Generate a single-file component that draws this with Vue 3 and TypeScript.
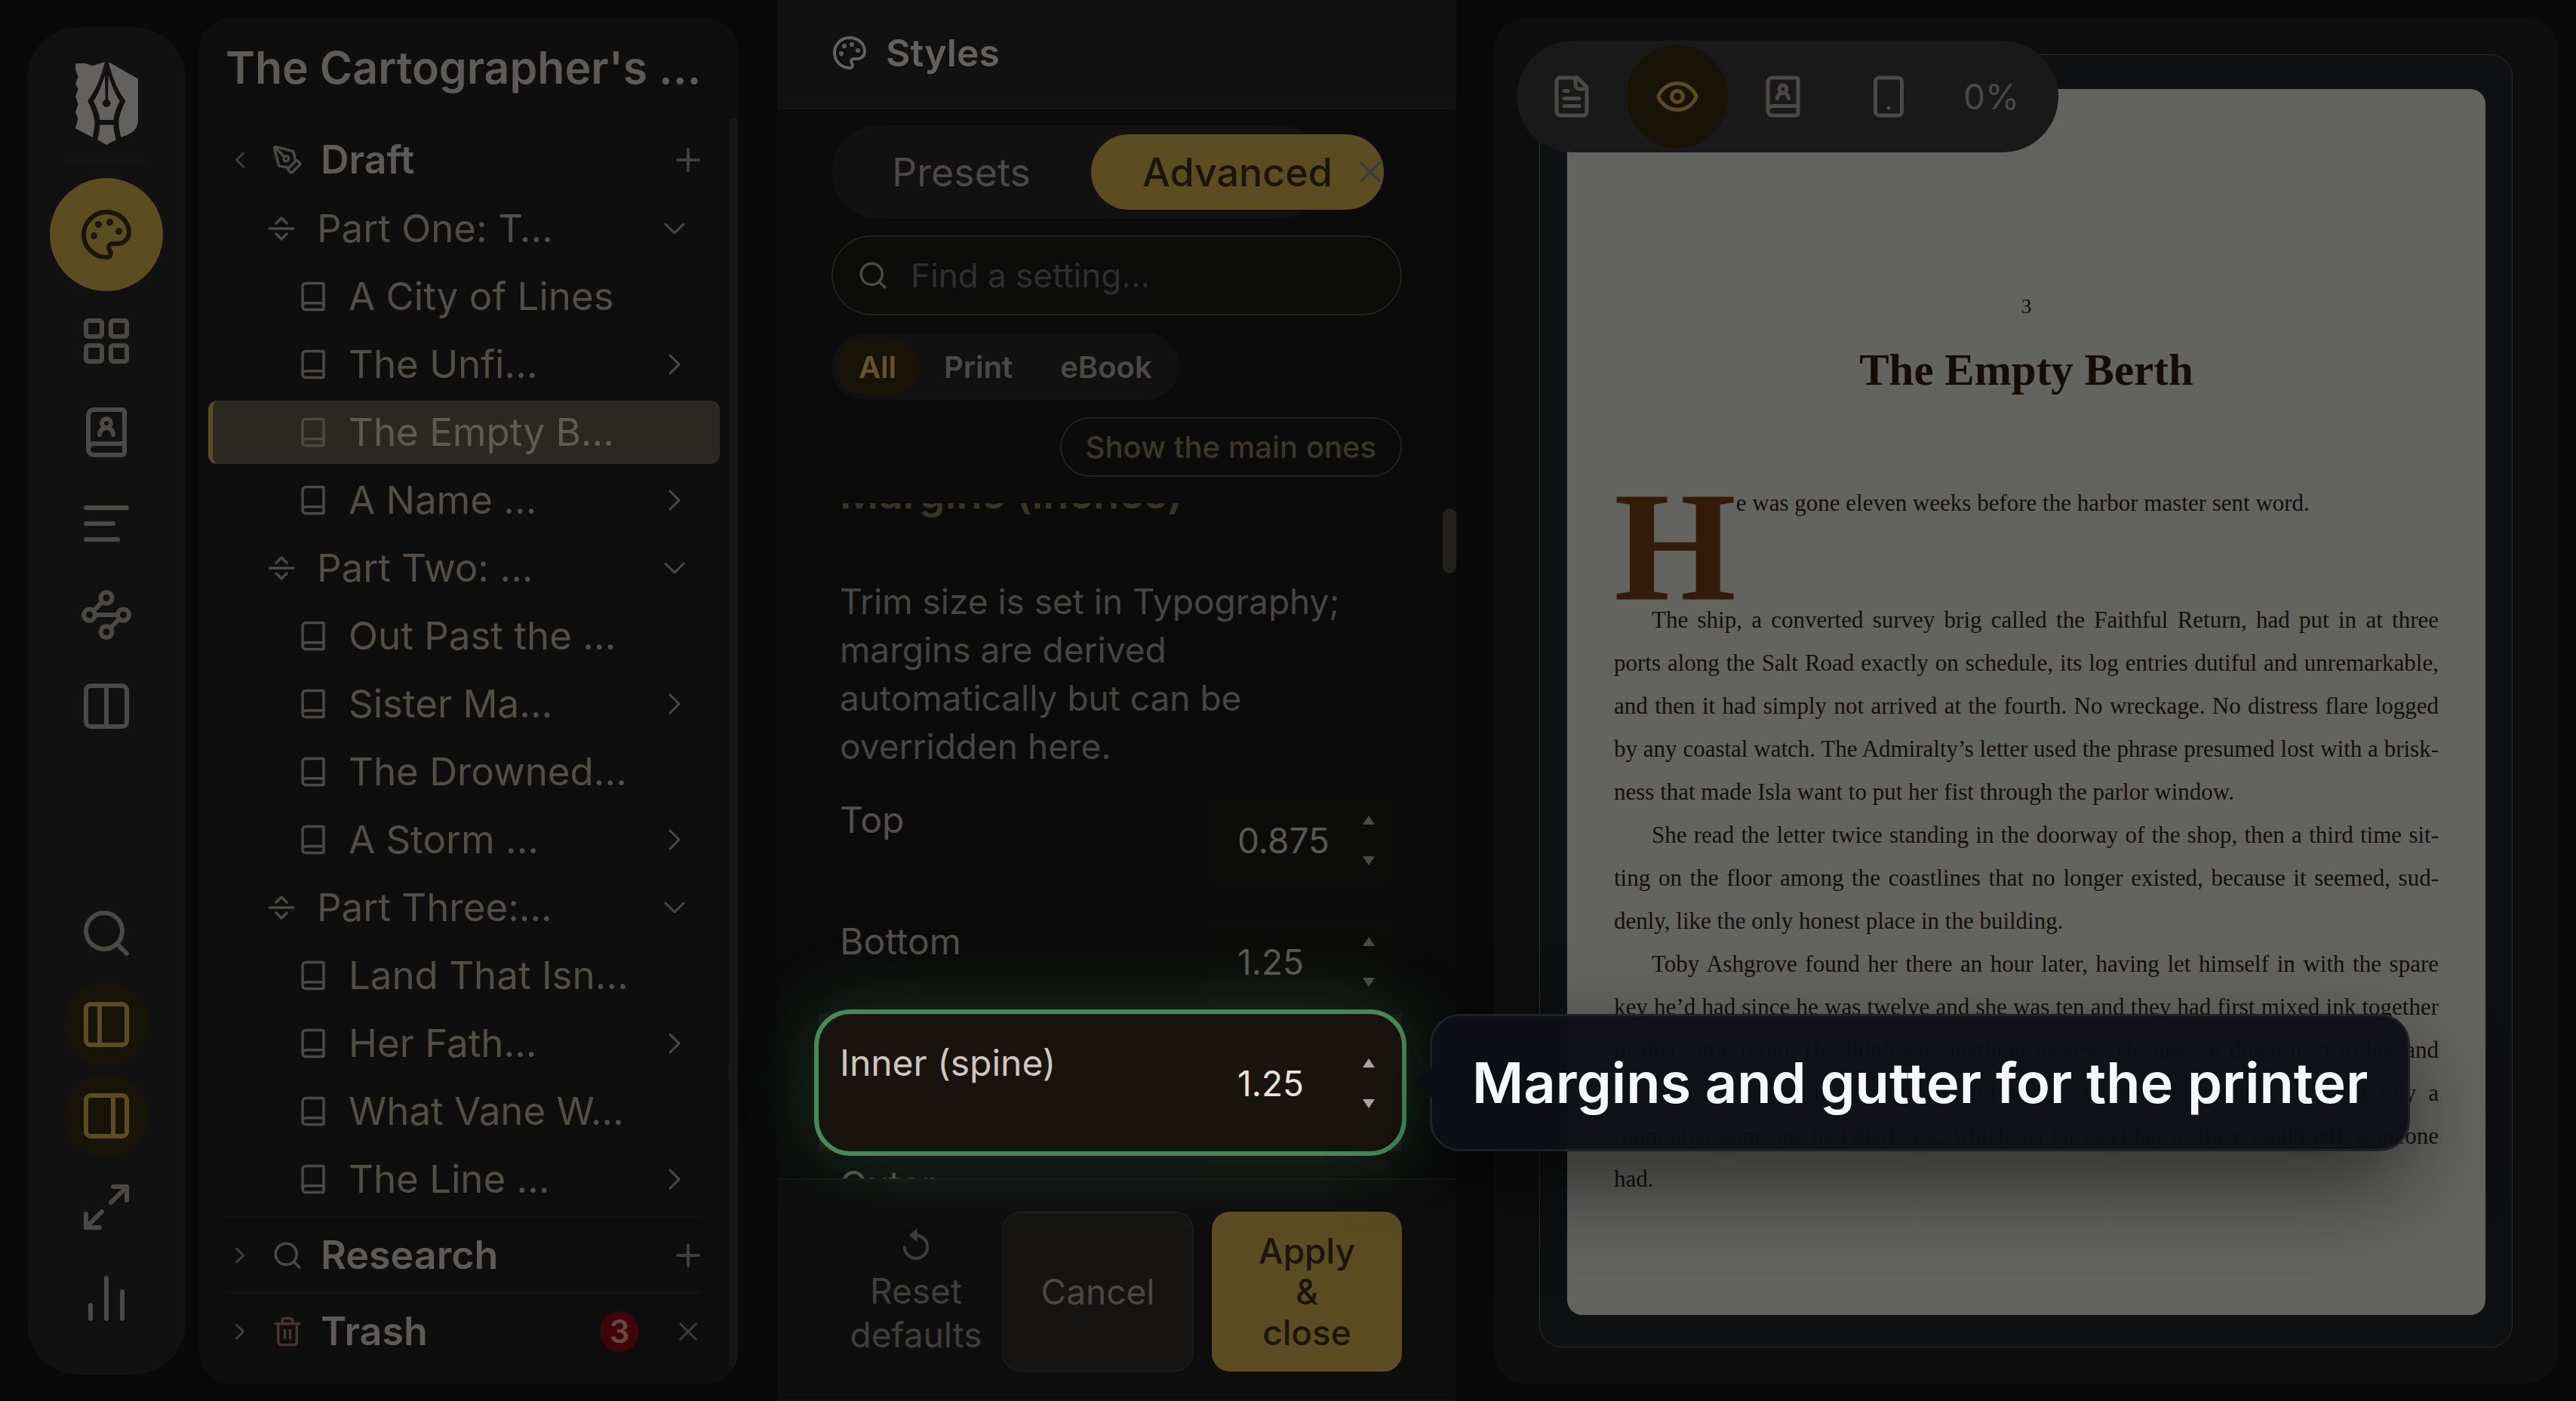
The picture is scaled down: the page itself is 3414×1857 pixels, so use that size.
<script setup lang="ts">
import { h, ref, type FunctionalComponent } from 'vue'

const glyphs: Record<string, string> = {
  palette:
    '<path d="M12 22a1 1 0 0 1 0-20 10 9 0 0 1 10 9 5 5 0 0 1-5 5h-2.25a1.75 1.75 0 0 0-1.4 2.8l.3.4a1.75 1.75 0 0 1-1.4 2.8z"/><circle cx="13.5" cy="6.5" r=".5" fill="currentColor"/><circle cx="17.5" cy="10.5" r=".5" fill="currentColor"/><circle cx="6.5" cy="12.5" r=".5" fill="currentColor"/><circle cx="8.5" cy="7.5" r=".5" fill="currentColor"/>',
  grid: '<rect width="7" height="7" x="3" y="3" rx="1"/><rect width="7" height="7" x="14" y="3" rx="1"/><rect width="7" height="7" x="14" y="14" rx="1"/><rect width="7" height="7" x="3" y="14" rx="1"/>',
  bookUser:
    '<path d="M15 13a3 3 0 1 0-6 0"/><path d="M4 19.5v-15A2.5 2.5 0 0 1 6.5 2H19a1 1 0 0 1 1 1v18a1 1 0 0 1-1 1H6.5a1 1 0 0 1 0-5H20"/><circle cx="12" cy="8" r="2"/>',
  lines: '<path d="M21 5H3"/><path d="M15 12H3"/><path d="M17 19H3"/>',
  waypoints:
    '<circle cx="12" cy="4.5" r="2.5"/><path d="m10.2 6.3-3.9 3.9"/><circle cx="4.5" cy="12" r="2.5"/><path d="M7 12h10"/><circle cx="19.5" cy="12" r="2.5"/><path d="m13.8 17.7 3.9-3.9"/><circle cx="12" cy="19.5" r="2.5"/>',
  columns: '<rect width="18" height="18" x="3" y="3" rx="2"/><path d="M12 3v18"/>',
  search: '<circle cx="11" cy="11" r="8"/><path d="m21 21-4.3-4.3"/>',
  panelLeft: '<rect width="18" height="18" x="3" y="3" rx="2"/><path d="M9 3v18"/>',
  panelRight: '<rect width="18" height="18" x="3" y="3" rx="2"/><path d="M15 3v18"/>',
  expand: '<path d="M15 3h6v6"/><path d="m21 3-7 7"/><path d="m3 21 7-7"/><path d="M9 21H3v-6"/>',
  chart: '<path d="M5 21v-6"/><path d="M12 21V3"/><path d="M19 21V9"/>',
  chevronLeft: '<path d="m15 18-6-6 6-6"/>',
  chevronRight: '<path d="m9 18 6-6-6-6"/>',
  chevronDown: '<path d="m6 9 6 6 6-6"/>',
  plus: '<path d="M5 12h14"/><path d="M12 5v14"/>',
  close: '<path d="M18 6 6 18"/><path d="m6 6 12 12"/>',
  pen: '<path d="M15.707 21.293a1 1 0 0 1-1.414 0l-1.586-1.586a1 1 0 0 1 0-1.414l5.586-5.586a1 1 0 0 1 1.414 0l1.586 1.586a1 1 0 0 1 0 1.414z"/><path d="m18 13-1.375-6.874a1 1 0 0 0-.746-.776L3.235 2.028a1 1 0 0 0-1.207 1.207L5.35 15.879a1 1 0 0 0 .776.746L13 18"/><path d="m2.3 2.3 7.286 7.286"/><circle cx="11" cy="11" r="2"/>',
  separator: '<path d="M3 12h18"/><path d="m8 8 4-4 4 4"/><path d="m16 16-4 4-4-4"/>',
  book: '<path d="M4 19.5v-15A2.5 2.5 0 0 1 6.5 2H19a1 1 0 0 1 1 1v18a1 1 0 0 1-1 1H6.5a1 1 0 0 1 0-5H20"/>',
  trash:
    '<path d="M3 6h18"/><path d="M19 6v14a2 2 0 0 1-2 2H7a2 2 0 0 1-2-2V6"/><path d="M8 6V4a2 2 0 0 1 2-2h4a2 2 0 0 1 2 2v2"/><path d="M10 11v6"/><path d="M14 11v6"/>',
  file: '<path d="M15 2H6a2 2 0 0 0-2 2v16a2 2 0 0 0 2 2h12a2 2 0 0 0 2-2V7z"/><path d="M14 2v4a2 2 0 0 0 2 2h4"/><path d="M10 9H8"/><path d="M16 13H8"/><path d="M16 17H8"/>',
  eye: '<path d="M2.062 12.348a1 1 0 0 1 0-.696 10.75 10.75 0 0 1 19.876 0 1 1 0 0 1 0 .696 10.75 10.75 0 0 1-19.876 0"/><circle cx="12" cy="12" r="3"/>',
  phone: '<rect width="14" height="20" x="5" y="2" rx="2"/><path d="M12 18h.01"/>',
  reset: '<path d="M4.4 13.6a7.6 7.6 0 1 0 7.6-7.8"/><path d="M12.8 1v9L7.4 5.6z" fill="currentColor" stroke="none"/>',
}

const Icon: FunctionalComponent<{ name: string; size: number; stroke?: number }> = (props) =>
  h('svg', {
    width: props.size,
    height: props.size,
    viewBox: '0 0 24 24',
    fill: 'none',
    stroke: 'currentColor',
    'stroke-width': props.stroke ?? 2,
    'stroke-linecap': 'round',
    'stroke-linejoin': 'round',
    'aria-hidden': 'true',
    innerHTML: glyphs[props.name],
  })
Icon.props = ['name', 'size', 'stroke']

const railTop = [
  { icon: 'palette', label: 'Styles', kind: 'primary' },
  { icon: 'grid', label: 'Corkboard', kind: '' },
  { icon: 'bookUser', label: 'Characters', kind: '' },
  { icon: 'lines', label: 'Outline', kind: '' },
  { icon: 'waypoints', label: 'Plot map', kind: '' },
  { icon: 'columns', label: 'Split view', kind: '' },
]
const railBottom = [
  { icon: 'search', label: 'Search', kind: '' },
  { icon: 'panelLeft', label: 'Left panel', kind: 'on' },
  { icon: 'panelRight', label: 'Right panel', kind: 'on' },
  { icon: 'expand', label: 'Full screen', kind: '' },
  { icon: 'chart', label: 'Statistics', kind: '' },
]

interface TreeRow {
  text: string
  part?: boolean
  more?: boolean
  selected?: boolean
}
const tree: TreeRow[] = [
  { text: 'Part One: T…', part: true },
  { text: 'A City of Lines' },
  { text: 'The Unfi…', more: true },
  { text: 'The Empty B…', selected: true },
  { text: 'A Name …', more: true },
  { text: 'Part Two: …', part: true },
  { text: 'Out Past the …' },
  { text: 'Sister Ma…', more: true },
  { text: 'The Drowned…' },
  { text: 'A Storm …', more: true },
  { text: 'Part Three:…', part: true },
  { text: 'Land That Isn…' },
  { text: 'Her Fath…', more: true },
  { text: 'What Vane W…' },
  { text: 'The Line …', more: true },
]

const margins = ref([
  { id: 'top', label: 'Top', value: '0.875', active: false },
  { id: 'bottom', label: 'Bottom', value: '1.25', active: false },
  { id: 'inner', label: 'Inner (spine)', value: '1.25', active: true },
  { id: 'outer', label: 'Outer', value: '0.75', active: false },
])

const paragraphs: string[][] = [
  [
    'The ship, a converted survey brig called the Faithful Return, had put in at three',
    'ports along the Salt Road exactly on schedule, its log entries dutiful and unremarkable,',
    'and then it had simply not arrived at the fourth. No wreckage. No distress flare logged',
    'by any coastal watch. The Admiralty’s letter used the phrase presumed lost with a brisk-',
    'ness that made Isla want to put her fist through the parlor window.',
  ],
  [
    'She read the letter twice standing in the doorway of the shop, then a third time sit-',
    'ting on the floor among the coastlines that no longer existed, because it seemed, sud-',
    'denly, like the only honest place in the building.',
  ],
  [
    'Toby Ashgrove found her there an hour later, having let himself in with the spare',
    'key he’d had since he was twelve and she was ten and they had first mixed ink together',
    'in this same room. He didn’t say anything useless. He just sat down next to her and',
    'started rolling the charts she had laid on the table, almost the way you’d tidy a',
    'room after someone had died in it, which, as far as either of them could tell, someone',
    'had.',
  ],
]
</script>

<template>
  <div class="app">
    <nav class="rail" aria-label="Main">
      <svg class="logo" viewBox="300 207 247 279" preserveAspectRatio="none" aria-hidden="true">
        <path d="M300 212H340L367 220 416 207C400 262 380 303 348 338 362 362 374 386 376 410 376 428 370 448 368 461L300 430 310 398 300 375 311 350 300 323 311 298 300 279 311 257 300 234Z" />
        <path d="M430 207 547 264V400C547 438 520 448 480 461 476 448 471 428 471 410 472 386 484 362 498 338 466 303 446 262 430 207Z" />
        <path d="M416 252C404 285 390 315 371 339 384 360 393 380 397 402H450C453 380 462 360 475 339 456 315 442 285 430 252L428 334C435 336 439 341 439 346 439 353 432 359 423 359 414 359 407 353 407 346 407 341 411 336 418 334Z" />
        <path d="M397 419H450C451 438 455 455 460 468L423 486 387 468C392 455 395 438 397 419Z" />
      </svg>
      <hr />
      <button v-for="b in railTop" :key="b.icon" type="button" :class="b.kind" :aria-label="b.label">
        <Icon :name="b.icon" :size="72" />
      </button>
      <div class="spring"></div>
      <button v-for="b in railBottom" :key="b.icon" type="button" :class="b.kind" :aria-label="b.label">
        <Icon :name="b.icon" :size="72" />
      </button>
    </nav>

    <aside class="binder">
      <h1>The Cartographer's …</h1>
      <div class="binder-body">
        <div class="tree">
          <div class="section">
            <Icon class="fold" name="chevronLeft" :size="36" />
            <Icon class="kind" name="pen" :size="42" />
            <h2>Draft</h2>
            <button type="button" aria-label="Add to draft"><Icon name="plus" :size="48" /></button>
          </div>
          <ul>
            <li v-for="row in tree" :key="row.text" :class="{ part: row.part, selected: row.selected }">
              <Icon :name="row.part ? 'separator' : 'book'" :size="42" />
              <a href="#">{{ row.text }}</a>
              <Icon v-if="row.part" name="chevronDown" :size="48" :stroke="1.5" />
              <Icon v-else-if="row.more" name="chevronRight" :size="48" :stroke="1.5" />
            </li>
          </ul>
          <div class="section ruled">
            <Icon class="fold" name="chevronRight" :size="36" />
            <Icon class="kind" name="search" :size="42" />
            <h2>Research</h2>
            <button type="button" aria-label="Add to research"><Icon name="plus" :size="48" /></button>
          </div>
          <div class="section ruled">
            <Icon class="fold" name="chevronRight" :size="36" />
            <Icon class="kind danger" name="trash" :size="42" />
            <h2>Trash</h2>
            <span class="count">3</span>
            <button type="button" aria-label="Empty trash"><Icon name="close" :size="42" :stroke="1.5" /></button>
          </div>
        </div>
        <div class="track"></div>
      </div>
    </aside>

    <section class="styles">
      <header>
        <Icon name="palette" :size="48" />
        <h2>Styles</h2>
      </header>
      <div class="controls">
        <div class="tab-row">
          <div class="tabs">
            <button type="button">Presets</button>
            <button type="button" class="active">Advanced</button>
          </div>
          <button type="button" class="dismiss" aria-label="Close"><Icon name="close" :size="48" /></button>
        </div>
        <label class="find">
          <Icon name="search" :size="42" />
          <input type="text" placeholder="Find a setting..." aria-label="Find a setting" />
        </label>
        <div class="filters">
          <button type="button" class="active">All</button>
          <button type="button">Print</button>
          <button type="button">eBook</button>
        </div>
        <button type="button" class="main-ones">Show the main ones</button>
      </div>
      <div class="settings">
        <div class="settings-content">
          <h3>Margins (inches)</h3>
          <p>Trim size is set in Typography; margins are derived automatically but can be overridden here.</p>
          <div v-for="m in margins" :key="m.id" class="setting" :class="{ lit: m.active }">
            <label :for="m.id">{{ m.label }}</label>
            <div class="field">
              <input :id="m.id" v-model="m.value" type="text" inputmode="decimal" />
              <div class="steps">
                <button type="button" aria-label="Increase">
                  <svg width="16" height="12" viewBox="0 0 16 12"><path d="M8 0 16 12H0Z" fill="currentColor" /></svg>
                </button>
                <button type="button" aria-label="Decrease">
                  <svg width="16" height="12" viewBox="0 0 16 12"><path d="M0 0H16L8 12Z" fill="currentColor" /></svg>
                </button>
              </div>
            </div>
          </div>
        </div>
        <div class="thumb"></div>
      </div>
      <footer>
        <button type="button" class="reset">
          <Icon name="reset" :size="48" />
          <span>Reset defaults</span>
        </button>
        <button type="button" class="cancel">Cancel</button>
        <button type="button" class="apply">Apply &amp; close</button>
      </footer>
      <div class="spotlight"></div>
      <div class="tip" role="tooltip">Margins and gutter for the printer</div>
    </section>

    <main class="preview">
      <div class="frame">
        <article class="page">
          <p class="number">3</p>
          <h2>The Empty Berth</h2>
          <p class="opening"><span class="drop">H</span>e was gone eleven weeks before the harbor master sent word.</p>
          <p v-for="(lines, i) in paragraphs" :key="i" class="para">
            <span v-for="(line, j) in lines" :key="j" :class="{ last: j === lines.length - 1 }">{{ line }}</span>
          </p>
        </article>
      </div>
      <div class="toolbar">
        <button type="button" aria-label="Manuscript"><Icon name="file" :size="60" /></button>
        <button type="button" class="on" aria-label="Preview"><Icon name="eye" :size="60" /></button>
        <button type="button" aria-label="Book"><Icon name="bookUser" :size="60" /></button>
        <button type="button" aria-label="Device"><Icon name="phone" :size="60" /></button>
        <span>0%</span>
      </div>
    </main>
  </div>
</template>

<style>
body {
  background: #090909;
}
</style>

<style scoped>
* {
  box-sizing: border-box;
}
h1,
h2,
h3,
p,
ul,
hr {
  margin: 0;
  padding: 0;
}
button {
  border: 0;
  padding: 0;
  background: none;
  color: inherit;
  font: inherit;
}
input {
  border: 0;
  padding: 0;
  background: none;
  font: inherit;
  min-width: 0;
}
svg {
  display: block;
  flex: none;
}
.app {
  display: flex;
  height: 100vh;
  overflow: hidden;
  background: #090909;
  color: #4b4945;
  font-family: Inter, 'Liberation Sans', sans-serif;
}

/* icon rail */
.rail {
  flex: none;
  display: flex;
  flex-direction: column;
  align-items: center;
  gap: 10px;
  width: 210px;
  margin: 36px 18px 35px 36px;
  padding: 46px 0;
  border-radius: 68px;
  background: #111;
}
.logo {
  width: 83px;
  height: 110px;
  fill: #62615f;
}
.rail hr {
  width: 106px;
  height: 4px;
  margin: 10px 0;
  border: 0;
  background: #151515;
}
.rail button {
  display: grid;
  place-items: center;
  width: 110px;
  height: 111px;
  border-radius: 56px;
}
.rail .primary {
  width: 150px;
  height: 150px;
  border-radius: 75px;
  background: #5c4c22;
  color: #1a1606;
}
.rail .on {
  background: #181307;
  color: #5c4c22;
}
.spring {
  flex: 1;
}

/* binder */
.binder {
  flex: none;
  display: flex;
  flex-direction: column;
  width: 714px;
  margin: 24px 0 23px;
  border-radius: 42px;
  background: #0e0e0e;
  overflow: hidden;
}
.binder h1 {
  padding: 26px 35px 0;
  color: #5e5a57;
  font-size: 59px;
  line-height: 80px;
  font-weight: 600;
  white-space: nowrap;
}
.binder-body {
  flex: 1;
  display: flex;
  justify-content: space-between;
  padding: 26px 0 27px 12px;
}
.tree {
  width: 678px;
}
.track {
  width: 12px;
  border-radius: 6px;
  background: #171717;
}
.section {
  display: flex;
  align-items: center;
  height: 99px;
  margin: 0 24px;
  padding-top: 12px;
}
.section.ruled {
  height: 101px;
  padding: 2px 0 0;
  border-top: 3px solid #131313;
}
.section .fold {
  color: #423f3a;
}
.section .kind {
  margin: 0 23px 0 24px;
}
.section .danger {
  color: #4a3230;
}
.section h2 {
  flex: 1;
  color: #5e5a57;
  font-size: 52px;
  line-height: 64px;
  font-weight: 600;
}
.section button {
  display: grid;
  place-items: center;
  width: 48px;
  height: 48px;
  margin-right: -6px;
  color: #423f3a;
}
.count {
  width: 50px;
  height: 54px;
  margin-right: 42px;
  border-radius: 27px;
  background: #3f050b;
  color: #6b4543;
  font-size: 42px;
  line-height: 54px;
  font-weight: 600;
  text-align: center;
}
.tree ul {
  display: flex;
  flex-direction: column;
  gap: 6px;
  padding: 6px 0;
  list-style: none;
}
.tree li {
  display: flex;
  align-items: center;
  height: 84px;
  padding: 0 36px 0 112px;
  border-left: 6px solid transparent;
  border-radius: 12px;
}
.tree li.part {
  padding-left: 70px;
}
.tree li.selected {
  border-color: #5c4c22;
  background: #2b2822;
}
.tree a {
  flex: 1;
  margin-left: 26px;
  color: #524e45;
  font-size: 51px;
  line-height: 64px;
  text-decoration: none;
  white-space: nowrap;
}
.tree .selected a {
  color: #5e5a57;
}

/* styles panel */
.styles {
  position: relative;
  z-index: 1;
  flex: none;
  display: flex;
  flex-direction: column;
  width: 900px;
  margin: 0 50px 0 52px;
  background: #0b0b0b;
}
.styles header {
  display: flex;
  align-items: center;
  gap: 24px;
  height: 145px;
  padding: 0 72px 4px;
  border-bottom: 2px solid #161616;
  background: #111;
  color: #64605d;
}
.styles header h2 {
  font-size: 50px;
  line-height: 64px;
  font-weight: 600;
}
.controls {
  display: flex;
  flex-direction: column;
  align-items: flex-start;
  padding: 21px 72px 35px;
}
.tab-row {
  display: flex;
  align-items: center;
  width: 100%;
}
.tabs {
  display: flex;
  gap: 12px;
  width: 655px;
  height: 124px;
  padding: 12px;
  border-radius: 62px;
  background: #111;
  font-size: 52px;
}
.tabs button {
  flex: none;
  height: 100px;
  padding: 0 68px;
  border-radius: 50px;
}
.tabs .active {
  background: #5c4c22;
  color: #1a1606;
  font-weight: 500;
}
.dismiss {
  position: relative;
  margin-left: 35px;
  color: #3f3d3b;
}
.find {
  display: flex;
  align-items: center;
  gap: 29px;
  width: 100%;
  height: 106px;
  margin-top: 22px;
  padding: 0 32px;
  border: 2px solid #24221b;
  border-radius: 53px;
  background: #0c0c0a;
}
.find input {
  flex: 1;
  font-size: 44px;
}
.find input::placeholder {
  color: #2e2f33;
  opacity: 1;
}
.filters {
  display: flex;
  gap: 3px;
  margin-top: 24px;
  padding: 6px;
  border-radius: 44px;
  background: #111;
  font-size: 40px;
  font-weight: 600;
}
.filters button {
  height: 76px;
  padding: 0 30px;
  border-radius: 38px;
}
.filters .active {
  background: #181307;
  color: #66532a;
}
.main-ones {
  align-self: flex-end;
  height: 79px;
  margin-top: 23px;
  padding: 0 32px;
  border: 2px solid #24221d;
  border-radius: 40px;
  color: #3b362b;
  font-size: 40px;
  font-weight: 500;
}
.settings {
  flex: 1;
  display: flex;
  min-height: 0;
  overflow: hidden;
}
.settings-content {
  flex: 1;
  margin-top: -43px;
  padding: 0 84px 0 83px;
}
.settings h3 {
  color: #393425;
  font-size: 56px;
  line-height: 60px;
  font-weight: 600;
}
.settings p {
  margin: 81px 0 12px;
  padding-right: 24px;
  color: #454541;
  font-size: 46px;
  line-height: 64px;
}
.setting {
  position: relative;
  z-index: 0;
  display: flex;
  justify-content: space-between;
  height: 161px;
  padding-top: 20px;
  color: #524e4b;
  font-size: 48px;
}
.setting label {
  padding-top: 5px;
  line-height: 58px;
}
.field {
  display: flex;
  width: 248px;
  height: 122px;
  border-radius: 12px;
  background: #0c0c0a;
}
.field input {
  flex: 1;
  padding-left: 42px;
  color: #5a5653;
  font-size: 46px;
}
.steps {
  display: flex;
  flex-direction: column;
  justify-content: center;
  gap: 14px;
  width: 64px;
  color: #4b4945;
}
.steps button {
  display: grid;
  place-items: center;
  height: 40px;
}
.lit {
  color: #cfc6bd;
}
.lit::before {
  content: '';
  position: absolute;
  z-index: -1;
  inset: -11px -12px -10px -28px;
  background: #18140d;
}
.lit .field {
  background: #19150e;
}
.lit .field input {
  color: #ece3d6;
}
.lit .steps {
  color: #b0a99c;
}
.thumb {
  width: 18px;
  height: 86px;
  margin: 7px 0 0 -18px;
  border-radius: 9px;
  background: #23211b;
}
.styles footer {
  display: flex;
  justify-content: flex-end;
  gap: 24px;
  height: 295px;
  padding: 42px 72px 0;
  border-top: 2px solid #151515;
  border-bottom: 2px solid #151515;
  background: #0e0e0e;
  font-size: 46px;
}
.styles footer button {
  height: 212px;
}
.styles footer .reset {
  display: flex;
  flex-direction: column;
  align-items: center;
  width: 180px;
  padding-top: 20px;
  color: #403e3a;
  line-height: 58px;
}
.reset span {
  margin-top: 8px;
}
.styles footer .cancel {
  width: 254px;
  border: 2px solid #1e1c18;
  border-radius: 24px;
  background: #151412;
  color: #4b4843;
}
.styles footer .apply {
  width: 252px;
  padding: 0 50px;
  border-radius: 24px;
  background: #5c4c22;
  color: #1a1606;
  line-height: 54px;
  font-weight: 500;
}

/* guided tour layer */
.spotlight {
  position: absolute;
  right: 66px;
  bottom: 325px;
  left: 49px;
  height: 194px;
  border: 6px solid #468a5a;
  border-radius: 48px;
  box-shadow: 0 0 100px rgba(70, 150, 95, 0.28);
  pointer-events: none;
}
.tip {
  position: absolute;
  bottom: 331px;
  left: 865px;
  padding: 41px 53px;
  border: 3px solid #1f2226;
  border-radius: 40px;
  background: rgba(13, 16, 22, 0.97);
  box-shadow: 0 48px 120px rgba(0, 0, 0, 0.5);
  color: #f5f8fd;
  font-size: 74px;
  line-height: 94px;
  font-weight: 600;
  white-space: nowrap;
}
.tip::before {
  content: '';
  position: absolute;
  top: 68px;
  left: -26px;
  width: 26px;
  height: 40px;
  background: #0b0e13;
  clip-path: polygon(0 50%, 100% 0, 100% 100%);
}

/* book preview */
.preview {
  position: relative;
  flex: 1;
  display: flex;
  min-width: 0;
  margin: 24px 24px 23px 0;
  padding: 48px 60px;
  border-radius: 42px;
  background: #0e0e0e;
}
.frame {
  flex: 1;
  display: flex;
  padding: 45px 35px 42px 36px;
  border: 1px solid #2e2d28;
  border-radius: 30px;
  background: #0f1012;
}
.page {
  flex: 1;
  padding: 259px 62px 0;
  border-radius: 20px;
  background: #636360;
  color: #130f0d;
  font-family: 'Liberation Serif', serif;
  font-size: 31px;
  line-height: 57px;
}
.number {
  font-size: 28px;
  text-align: center;
}
.page h2 {
  color: #140d06;
  font-size: 59px;
  line-height: 72px;
  margin-top: 20px;
  text-align: center;
}
.opening {
  height: 155px;
  margin-top: 112px;
}
.drop {
  float: left;
  color: #331b09;
  font-size: 208px;
  line-height: 172px;
  height: 155px;
  font-weight: 700;
}
.para span {
  display: block;
  text-align-last: justify;
  white-space: nowrap;
}
.para span.last {
  text-align-last: left;
}
.para span:first-child {
  padding-left: 50px;
}
.toolbar {
  position: absolute;
  top: 30px;
  left: 30px;
  display: flex;
  align-items: center;
  gap: 6px;
  height: 148px;
  padding: 6px;
  border-radius: 74px;
  background: #191919;
}
.toolbar button {
  display: grid;
  place-items: center;
  width: 134px;
  height: 136px;
  border-radius: 68px;
}
.toolbar .on {
  background: #181307;
  color: #5c4c22;
}
.toolbar span {
  padding: 0 46px 0 26px;
  font-size: 46px;
}
</style>
